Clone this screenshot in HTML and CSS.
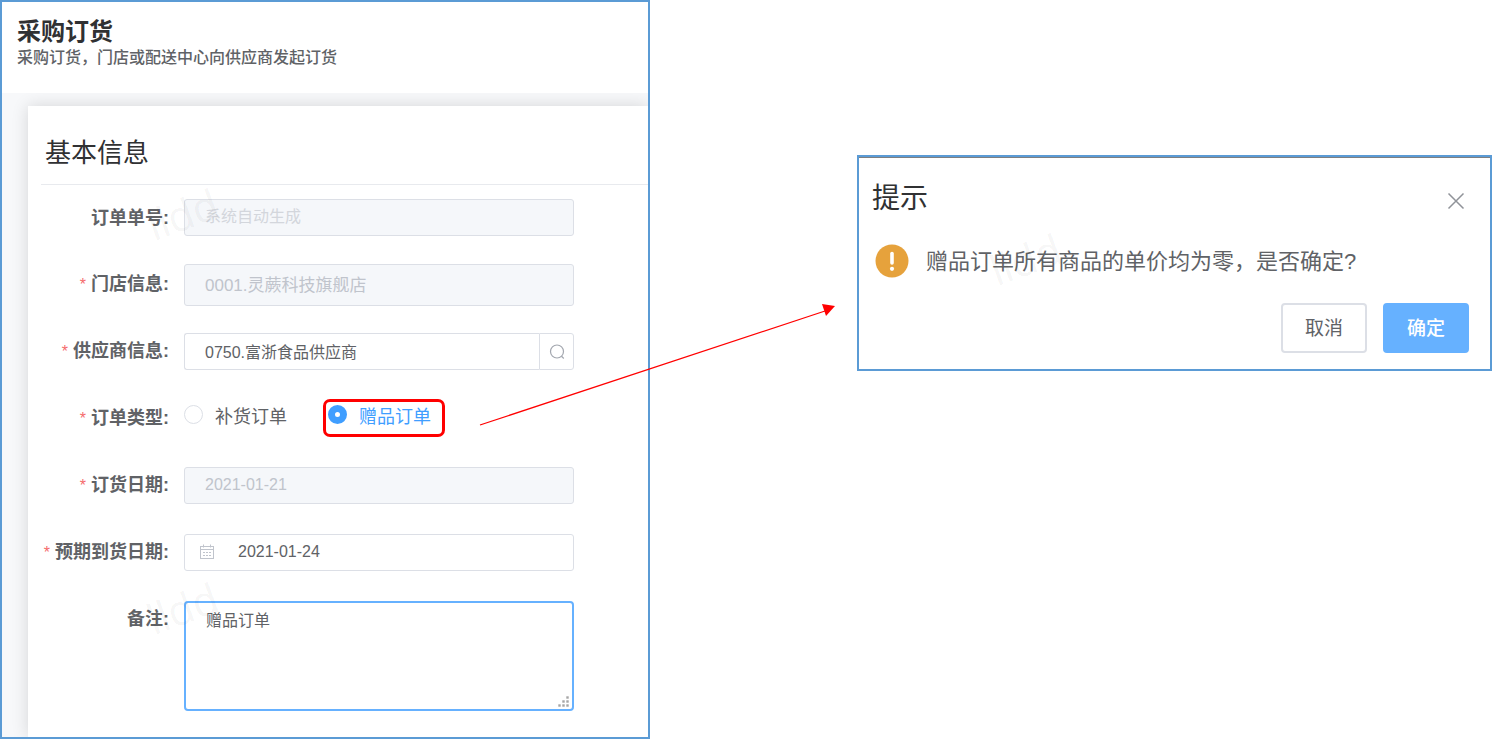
FILE: index.html
```html
<!DOCTYPE html>
<html lang="zh-CN">
<head>
    <meta charset="UTF-8">
    <meta name="viewport" content="width=device-width, initial-scale=1.0">
    <title>采购订货</title>
    <link rel="stylesheet" href="styles.css">
</head>
<body>
    <main class="page">
        <section class="order">
            <header class="order-header">
                <h1>采购订货</h1>
                <p>采购订货，门店或配送中心向供应商发起订货</p>
            </header>
            <div class="order-body">
                <form class="card">
                    <h2>基本信息</h2>
                    <div class="fields">
                        <div class="row">
                            <label class="label" for="orderNo">订单单号:</label>
                            <input class="input" id="orderNo" type="text" placeholder="系统自动生成" disabled>
                        </div>
                        <div class="row">
                            <label class="label required" for="store">门店信息:</label>
                            <input class="input large" id="store" type="text" value="0001.灵蕨科技旗舰店" disabled>
                        </div>
                        <div class="row">
                            <label class="label required" for="supplier">供应商信息:</label>
                            <div class="search">
                                <input class="input" id="supplier" type="text" value="0750.富浙食品供应商">
                                <button type="button" class="search-btn" aria-label="搜索">
                                    <svg width="16" height="16" viewBox="0 0 16 16" fill="none" stroke="#a3a7af" stroke-width="1.2">
                                        <circle cx="8" cy="7.5" r="6.5"/>
                                        <path d="M12.5 12.3l2.3 2.2"/>
                                    </svg>
                                </button>
                            </div>
                        </div>
                        <div class="row" role="radiogroup" aria-labelledby="typeLabel">
                            <span class="label required" id="typeLabel">订单类型:</span>
                            <div class="radios">
                                <label class="radio"><input type="radio" name="type">补货订单</label>
                                <label class="radio marked"><input type="radio" name="type" checked>赠品订单</label>
                            </div>
                        </div>
                        <div class="row">
                            <label class="label required" for="orderDate">订货日期:</label>
                            <input class="input" id="orderDate" type="text" value="2021-01-21" disabled>
                        </div>
                        <div class="row">
                            <label class="label required" for="arriveDate">预期到货日期:</label>
                            <div class="date">
                                <svg class="date-icon" width="16" height="16" viewBox="0 0 16 16" fill="none" stroke="#c0c4cc">
                                    <rect x="1.5" y="2.5" width="13" height="12"/>
                                    <path d="M1.5 5.5h13M4.5 .5v3M11.5 .5v3"/>
                                    <path d="M4 8.5h8M4 11.5h8" stroke-dasharray="2 1"/>
                                </svg>
                                <input class="input" id="arriveDate" type="text" value="2021-01-24">
                            </div>
                        </div>
                        <div class="row top">
                            <label class="label" for="remark">备注:</label>
                            <div class="remark">
                                <textarea class="input" id="remark">赠品订单</textarea>
                                <svg class="grip" width="12" height="12" viewBox="0 0 12 12" fill="#a6a6a6">
                                    <path d="M8 0h3v3H8zM4 4h3v3H4zM8 4h3v3H8zM0 8h3v3H0zM4 8h3v3H4zM8 8h3v3H8z" stroke="#fff" stroke-width=".6"/>
                                </svg>
                            </div>
                        </div>
                    </div>
                </form>
            </div>
            <span class="watermark first" aria-hidden="true">lldd</span>
            <span class="watermark second" aria-hidden="true">lldd</span>
        </section>

        <section class="dialog" role="dialog" aria-labelledby="dialogTitle">
            <div class="dialog-header">
                <h2 id="dialogTitle">提示</h2>
                <button type="button" class="close" aria-label="关闭">
                    <svg width="18" height="18" viewBox="0 0 18 18" fill="none" stroke="#909399" stroke-width="1.5">
                        <path d="M1.5 1.5l15 15M16.5 1.5l-15 15"/>
                    </svg>
                </button>
            </div>
            <div class="dialog-content">
                <svg width="34" height="34" viewBox="0 0 34 34">
                    <circle cx="17" cy="17" r="16.5" fill="#e6a23c"/>
                    <path d="M17 9.5v9.5" stroke="#fff" stroke-width="3.6" stroke-linecap="round"/>
                    <circle cx="17" cy="24.8" r="2.1" fill="#fff"/>
                </svg>
                <p>赠品订单所有商品的单价均为零，是否确定?</p>
            </div>
            <div class="dialog-footer">
                <button type="button" class="btn">取消</button>
                <button type="button" class="btn primary">确定</button>
            </div>
            <span class="watermark third" aria-hidden="true">lldd</span>
        </section>

        <!-- arrow from the gift order option to the dialog -->
        <svg class="arrow" width="360" height="130" viewBox="0 0 360 130">
            <path d="M3 125L348 11" stroke="#f00" stroke-width="1.2"/>
            <path d="M358 6L345 4L349 16z" fill="#f00"/>
        </svg>
    </main>
</body>
</html>
```

FILE: styles.css
```css
* {
    margin: 0;
    padding: 0;
    box-sizing: border-box;
}

body {
    background: #fff;
    color: #606266;
    font-family: "Liberation Sans", "Noto Sans CJK SC", sans-serif;
    font-size: 16px;
}

button,
input,
textarea {
    font-family: inherit;
    font-size: inherit;
    color: inherit;
}

.page {
    position: relative;
    display: grid;
    grid-template-columns: 650fr 635fr;
    column-gap: 207px;
    align-items: start;
    min-height: 100vh;
}

/* order form */
.order {
    position: relative;
    display: flex;
    flex-direction: column;
    min-height: 100vh;
    border: 2px solid #5b9bd5;
    overflow: hidden;
}

.order-header {
    padding: 15px 15px 24px;
}

.order-header h1 {
    font-size: 24px;
    line-height: 30px;
    color: #303133;
}

.order-header p {
    font-weight: 500;
    line-height: 22px;
}

.order-body {
    flex: 1;
    display: flex;
    background: #f7f8fa;
    padding: 13px 0 0 26px;
    overflow: hidden;
}

.card {
    flex: 1;
    padding: 26px 0 20px 13px;
    background: #fff;
    box-shadow: 0 0 16px rgba(0, 0, 0, 0.14);
}

.card h2 {
    padding: 0 0 10px 4px;
    border-bottom: 1px solid #e8eaee;
    font-size: 26px;
    font-weight: 400;
    line-height: 42px;
    color: #303133;
}

.fields {
    display: flex;
    flex-direction: column;
    gap: 30px;
    padding-top: 14px;
}

.row {
    display: grid;
    grid-template-columns: 128px minmax(0, 390px);
    grid-template-rows: 37px;
    column-gap: 15px;
    align-items: center;
}

.row.top {
    grid-template-rows: auto;
    align-items: start;
}

.label {
    font-size: 18px;
    font-weight: 700;
    line-height: 36px;
    text-align: right;
    white-space: nowrap;
}

.required::before {
    content: "*";
    margin-right: 5px;
    color: #f56c6c;
    font-size: 16px;
    font-weight: 400;
}

.input {
    width: 100%;
    height: 37px;
    padding: 0 20px 2px;
    border: 1px solid #dcdfe6;
    border-radius: 3px;
    background: #fff;
    outline: none;
}

.input:disabled {
    background: #f5f7fa;
    color: #c0c4cc;
}

.input::placeholder {
    color: #d3d6dc;
}

.input.large {
    height: 42px;
    font-size: 17px;
}

.search {
    display: flex;
}

.search .input {
    border-right: 0;
    border-radius: 3px 0 0 3px;
}

.search-btn {
    display: flex;
    flex: none;
    align-items: center;
    justify-content: center;
    width: 35px;
    border: 1px solid #dcdfe6;
    border-radius: 0 3px 3px 0;
    background: #fff;
}

.radios {
    display: flex;
    align-items: center;
    gap: 36px;
    padding-bottom: 2px;
}

.radio {
    display: flex;
    align-items: center;
    gap: 12px;
    height: 38px;
    padding-bottom: 6px;
    font-size: 18px;
    white-space: nowrap;
}

.radio input {
    appearance: none;
    width: 19px;
    height: 19px;
    border: 1px solid #dcdfe6;
    border-radius: 50%;
    background: #fff;
}

.radio input:checked {
    border: 7px solid #409eff;
}

.radio.marked {
    padding: 0 11px 6px 2px;
    border: 3px solid #f00;
    border-radius: 7px;
    color: #409eff;
}

.date,
.remark {
    position: relative;
}

.date .input {
    padding-left: 53px;
}

.date-icon {
    position: absolute;
    left: 15px;
    top: 10px;
}

.remark {
    display: flex;
}

.remark .input {
    height: 110px;
    padding: 6px 20px;
    border: 2px solid #66b1ff;
    border-radius: 4px;
    line-height: 24px;
    resize: none;
}

.grip {
    position: absolute;
    right: 4px;
    bottom: 3px;
}

/* confirm dialog */
.dialog {
    position: relative;
    margin-top: 155px;
    padding: 21px 21px 16px 13px;
    border: 2px solid #5b9bd5;
    box-shadow: inset 0 1px #7f7f7f;
}

.dialog-header {
    display: flex;
    align-items: center;
    justify-content: space-between;
}

.dialog-header h2 {
    font-size: 28px;
    font-weight: 400;
    line-height: 42px;
    color: #303133;
}

.close {
    display: flex;
    padding: 4px 4px 0;
    border: 0;
    background: none;
}

.dialog-content {
    display: flex;
    align-items: center;
    gap: 17px;
    padding: 22px 0 24px 3px;
}

.dialog-content p {
    padding-top: 3px;
    font-size: 22px;
    line-height: 34px;
    white-space: nowrap;
}

.dialog-footer {
    display: flex;
    justify-content: flex-end;
    gap: 16px;
}

.btn {
    width: 86px;
    height: 50px;
    padding-bottom: 3px;
    border: 2px solid #dcdfe6;
    border-radius: 4px;
    background: #fff;
    font-size: 19px;
}

.btn.primary {
    border-color: #66b1ff;
    background: #66b1ff;
    color: #fff;
    font-weight: 500;
}

.arrow {
    position: absolute;
    left: 477px;
    top: 300px;
}

.watermark {
    position: absolute;
    font-family: "Open Sans", "Noto Sans", sans-serif;
    font-size: 42px;
    line-height: 48px;
    color: rgba(0, 0, 0, 0.05);
    transform: rotate(-20deg);
    pointer-events: none;
}

.watermark.first {
    left: 144px;
    top: 188px;
}

.watermark.second {
    left: 144px;
    top: 582px;
}

.watermark.third {
    left: 130px;
    top: 78px;
}
```
